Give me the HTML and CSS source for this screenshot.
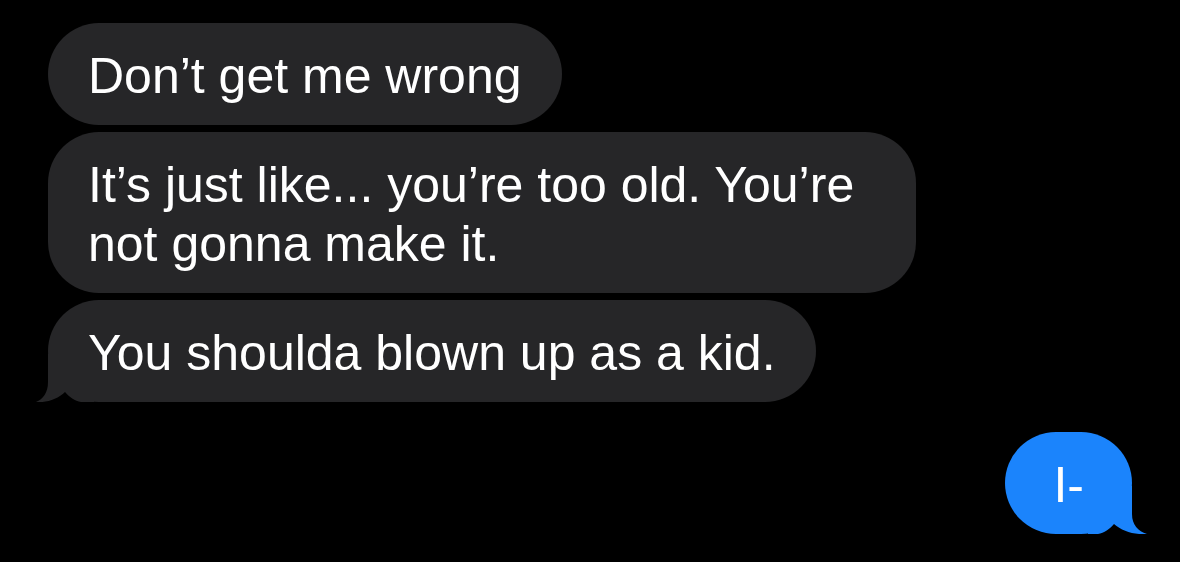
FILE: index.html
```html
<!DOCTYPE html>
<html lang="en">
<head>
<meta charset="utf-8">
<title>Messages</title>
<link rel="stylesheet" href="styles.css">
</head>
<body>
  <main class="thread">
    <div class="bubble incoming">Don’t get me wrong</div>
    <div class="bubble incoming">It’s just like... you’re too old. You’re not gonna make it.</div>
    <div class="bubble incoming has-tail">You shoulda blown up as a kid.
      <svg class="tail tail-left" width="60" height="48" viewBox="0 0 60 48" aria-hidden="true">
        <path d="M14,0 L14,28 C14,39 9,45 2,48 C12,49 24,45 31,38 C35,43 41,47 47,48 L60,48 L60,0 Z"/>
      </svg>
    </div>
    <div class="bubble outgoing has-tail">I-
      <svg class="tail tail-right" width="60" height="48" viewBox="0 0 60 48" aria-hidden="true">
        <path d="M16,0 L16,28 C16,39 10,45 1,48 C14,49 26,45 34,38 C38,43 44,47 50,48 L60,48 L60,0 Z"/>
      </svg>
    </div>
  </main>
</body>
</html>
```

FILE: styles.css
```css
html, body {
  margin: 0;
  padding: 0;
  background: #000;
}

body {
  width: 1180px;
  height: 562px;
  overflow: hidden;
  font-family: "Liberation Sans", Arial, Helvetica, sans-serif;
  -webkit-font-smoothing: antialiased;
}

.thread {
  display: flex;
  flex-direction: column;
  gap: 7px;
  padding: 23px 48px 0 48px;
}

.bubble {
  position: relative;
  box-sizing: border-box;
  max-width: 868px;
  padding: 24px 40px 19px 40px;
  border-radius: 51px;
  font-size: 50px;
  line-height: 59px;
  color: #fff;
}

.incoming {
  align-self: flex-start;
  background: #262628;
}

.outgoing {
  align-self: flex-end;
  margin-top: 23px;
  padding-left: 48px;
  padding-right: 48px;
  background: #1b84fc;
}

.tail {
  position: absolute;
  bottom: 0;
  display: block;
}

.tail-left {
  left: -14px;
  fill: #262628;
}

.tail-right {
  right: -16px;
  transform: scaleX(-1);
  fill: #1b84fc;
}
```
